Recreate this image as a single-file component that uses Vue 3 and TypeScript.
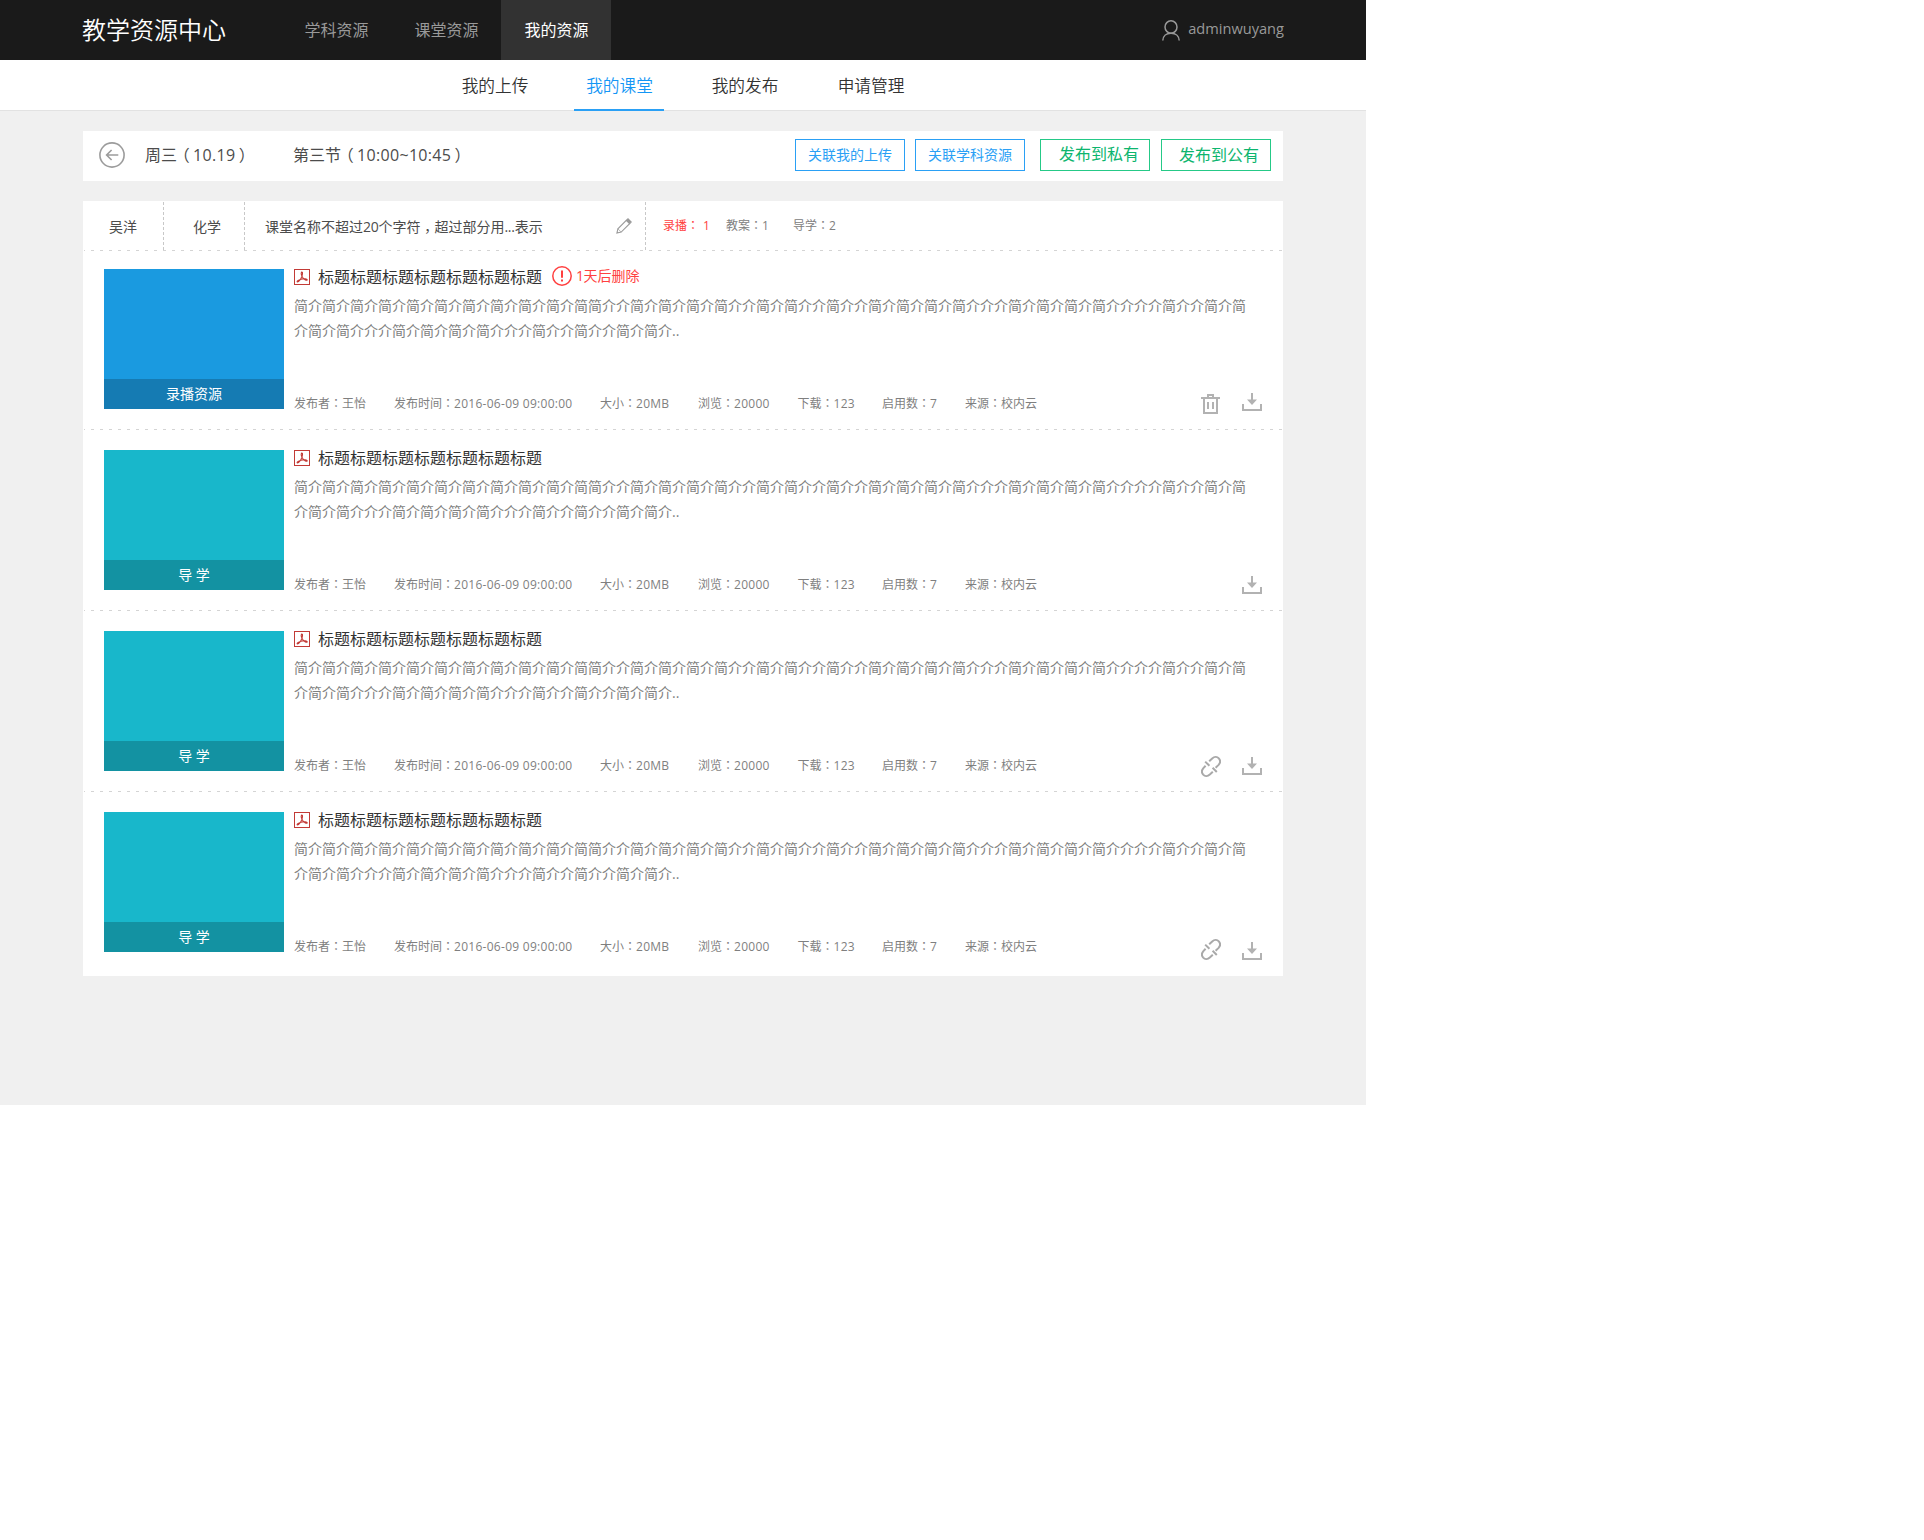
<script setup lang="ts">
import { h, type FunctionalComponent } from 'vue'

// Splits a mixed string so that digits, colons and brackets can be spaced on their own
const Mixed: FunctionalComponent<{ text: string }> = (props) =>
  h(
    'span',
    { class: 'mixed' },
    (props.text.match(/[\x21-\x7e]+(?: [\x21-\x7e]+)*|[：，]|（|）|[^\x21-\x7e：，（）]+/g) ?? []).map((part) => {
      let kind = 'han'
      if (/^[\x21-\x7e]/.test(part)) kind = 'latin'
      else if (part === '：') kind = 'mid'
      else if (part === '，') kind = 'comma'
      else if (part === '（') kind = 'open'
      else if (part === '）') kind = 'close'
      return h('span', { class: 'run-' + kind }, part)
    }),
  )
Mixed.props = ['text']

interface Resource {
  kind: 'record' | 'guide'
  label: string
  warning?: string
  action?: 'trash' | 'link'
}

const mainTabs = ['学科资源', '课堂资源', '我的资源']
const subTabs = ['我的上传', '我的课堂', '我的发布', '申请管理']

const title = '标题标题标题标题标题标题标题'
const intro = [
  '简介简介简介简介简介简介简介简介简介简介简简介介简介简介简介简介介简介简介介简介介简介简介简介简介介介简介简介简介简介介介介简介介简介简',
  '介简介简介介介简介简介简介简介介介简介介简介介简介简介..',
]
const meta = [
  '发布者：王怡',
  '发布时间：2016-06-09 09:00:00',
  '大小：20MB',
  '浏览：20000',
  '下载：123',
  '启用数：7',
  '来源：校内云',
]

const resources: Resource[] = [
  { kind: 'record', label: '录播资源', warning: '1天后删除', action: 'trash' },
  { kind: 'guide', label: '导 学' },
  { kind: 'guide', label: '导 学', action: 'link' },
  { kind: 'guide', label: '导 学', action: 'link' },
]
</script>

<template>
  <div class="page">
    <header class="top">
      <h1 class="brand">教学资源中心</h1>
      <nav class="main-nav">
        <a v-for="(tab, i) in mainTabs" :key="tab" :class="{ active: i === 2 }">{{ tab }}</a>
      </nav>
      <div class="user">
        <svg width="18" height="21" viewBox="0 0 18 21" fill="none" stroke="#999" stroke-width="1.5">
          <ellipse cx="9" cy="7" rx="6" ry="6.2" />
          <path d="M.8 20.5C1 16.5 4 13.3 9 13.3s8 3.2 8.2 7.2" />
        </svg>
        <span>adminwuyang</span>
      </div>
    </header>

    <nav class="sub-nav">
      <a v-for="(tab, i) in subTabs" :key="tab" :class="{ active: i === 1 }">{{ tab }}</a>
    </nav>

    <section class="toolbar">
      <svg class="back" width="26" height="26" viewBox="0 0 26 26" fill="none" stroke="#9c9c9c" stroke-width="1.6">
        <circle cx="13" cy="13" r="12.1" />
        <path d="M19.3 13H8M12.6 8 7.6 13l5 5" />
      </svg>
      <span class="day"><Mixed text="周三（10.19）" /></span>
      <span class="lesson"><Mixed text="第三节（10:00~10:45）" /></span>
      <div class="buttons">
        <button class="blue">关联我的上传</button>
        <button class="blue">关联学科资源</button>
        <button class="green private">发布到私有</button>
        <button class="green public">发布到公有</button>
      </div>
    </section>

    <section class="panel">
      <div class="summary">
        <span class="teacher">吴洋</span>
        <i class="vline"></i>
        <span class="subject">化学</span>
        <i class="vline"></i>
        <span class="course"><Mixed text="课堂名称不超过20个字符，超过部分用...表示" /></span>
        <svg class="pencil" width="16" height="16" viewBox="0 0 16 16" fill="none" stroke="#9a9a9a" stroke-width="1.1">
          <path d="M.9 15.1 1.9 10.8 10.3 2.4 13.6 5.7 5.2 14.1Z" />
          <path d="M10.6 2.2 12 .8 15.2 4 13.8 5.4Z" fill="#9a9a9a" />
          <path d="M1.9 10.8 5.2 14.1" stroke-width=".7" />
        </svg>
        <i class="vline"></i>
        <span class="count red"><Mixed text="录播：" /><b><Mixed text="1" /></b></span>
        <span class="count plan"><Mixed text="教案：1" /></span>
        <span class="count"><Mixed text="导学：2" /></span>
      </div>

      <article v-for="(r, i) in resources" :key="i" :class="['row', 'row-' + (i + 1)]">
        <i class="hline"></i>
        <div class="row-body">
          <div :class="['thumb', r.kind]">
            <span>{{ r.label }}</span>
          </div>
          <div class="info">
            <div class="title-line">
              <svg width="16" height="16" viewBox="0 0 16 16" fill="none" stroke="#c23a36">
                <rect x=".5" y=".5" width="15" height="15" />
                <path d="M7.6 3.1C9 2.8 8.500 5.500 7.800 7.600 6.800 10 4.800 12.700 3.400 13 2.400 12.700 4.300 10.900 7 10.200S13.400 9.800 13.200 10.900C12.600 11.800 9.700 10.300 8.500 8.200 7.600 6.500 6.900 3.800 7.600 3.100Z" stroke-width="1.1" />
              </svg>
              <h2>{{ title }}</h2>
              <span v-if="r.warning" class="warning">
                <svg width="20" height="20" viewBox="0 0 20 20" fill="none" stroke="#ff4040" stroke-width="1.5">
                  <circle cx="10" cy="10" r="9.200" />
                  <path d="M10 4.500V11.800M10 13.600V15.600" stroke-width="2" />
                </svg>
                <Mixed :text="r.warning" />
              </span>
            </div>
            <p class="intro">
              <span v-for="line in intro" :key="line">{{ line }}</span>
            </p>
            <div class="foot">
              <span v-for="m in meta" :key="m"><Mixed :text="m" /></span>
            </div>
          </div>
          <div class="actions">
            <svg v-if="r.action === 'trash'" class="trash" width="19" height="20" viewBox="0 0 19 20" fill="none" stroke="#b2b2b2" stroke-width="2">
              <path d="M0 4H19M3 4V19H16V4M7 3V1H12V3" />
              <path d="M7 8V15M12 8V15" />
            </svg>
            <svg v-if="r.action === 'link'" class="link" width="20" height="21" viewBox="0 0 20 21" fill="none" stroke="#a9a9a9" stroke-width="2">
              <path d="M8.200 5.200 11.200 2.400C13.500.4 16.300.8 17.800 2.400 19.500 4.300 19.300 7 17.600 8.900L14.600 11.700" />
              <path d="M11.800 15.800 8.800 18.600C6.500 20.600 3.700 20.200 2.200 18.600.5 16.700.7 14 2.400 12.100L4.600 9.800" />
              <path d="M4.200 5.600 8.400 9.800M11.600 11.800 15.800 16" />
            </svg>
            <svg class="download" width="20" height="18" viewBox="0 0 20 18">
              <path d="M9 0H11V6.500H15L10 12 5 6.500H9Z" fill="#b2b2b2" />
              <path d="M1 11V17H19V11" fill="none" stroke="#b2b2b2" stroke-width="2" />
            </svg>
          </div>
        </div>
      </article>
    </section>
  </div>
</template>

<style>
body {
  margin: 0;
  background: #fff;
}
.mixed {
  white-space: nowrap;
}
.run-latin {
  letter-spacing: -0.032em;
}
.course .run-latin {
  letter-spacing: -0.02em;
}
.toolbar .run-latin {
  letter-spacing: 0.02em;
}
.foot .run-latin {
  letter-spacing: 0.023em;
}
.run-mid,
.run-comma {
  font-family: 'Noto Sans CJK TC', sans-serif;
}
.run-comma {
  position: relative;
  top: 0.28em;
}
.run-open {
  position: relative;
  left: -0.2em;
}
.run-close {
  position: relative;
  left: 0.2em;
}
</style>

<style scoped>
.page {
  width: 1366px;
  height: 1105px;
  background: #f0f0f0;
  font-family: 'Open Sans', 'Noto Sans CJK SC', sans-serif;
  color: #4c4c4c;
  font-size: 14px;
}
h1,
h2,
p {
  margin: 0;
  font-weight: 400;
}
svg {
  display: block;
  flex: none;
}
.top {
  height: 60px;
  box-sizing: border-box;
  padding: 0 82px 0 82px;
  background: #1a1a1a;
  display: flex;
}
.brand {
  width: 199px;
  font-size: 24px;
  font-weight: 350;
  line-height: 59px;
  color: #fff;
}
.main-nav {
  display: flex;
}
.main-nav a {
  width: 110px;
  box-sizing: border-box;
  padding-left: 1px;
  text-align: center;
  font-size: 16px;
  line-height: 61px;
  color: #999;
}
.main-nav a.active {
  background: #323232;
  color: #fff;
}
.user {
  margin-left: auto;
  display: flex;
  align-items: flex-start;
  gap: 8px;
  color: #999;
  font-size: 14.6px;
  line-height: 57px;
}
.user svg {
  margin-top: 20px;
}
.sub-nav {
  height: 51px;
  box-sizing: border-box;
  border-bottom: 1px solid #e2e2e2;
  background: #fff;
  display: flex;
  padding-left: 448px;
  gap: 36px;
}
.sub-nav a {
  width: 90px;
  height: 51px;
  box-sizing: border-box;
  text-align: center;
  font-size: 16.700px;
  font-weight: 350;
  line-height: 52px;
  color: #333;
}
.sub-nav a:first-child {
  padding-left: 4px;
}
.sub-nav a.active {
  padding-left: 1px;
  color: #1496f5;
  border-bottom: 2px solid #2aa0f5;
}
.toolbar {
  width: 1200px;
  height: 50px;
  margin: 20px 0 0 83px;
  background: #fff;
  display: flex;
  align-items: flex-start;
  font-size: 16px;
}
.back {
  margin: 11px 0 0 16px;
}
.day,
.lesson {
  line-height: 48px;
}
.day {
  width: 148px;
  margin-left: 20px;
}
.buttons {
  display: flex;
  margin: 8px 12px 0 auto;
}
.buttons button {
  width: 110px;
  height: 32px;
  padding: 0;
  background: none;
  font-family: inherit;
  text-align: left;
}
.buttons .blue {
  border: 1px solid #2aa0f5;
  color: #2aa0f5;
  font-size: 14px;
  text-indent: 12px;
  margin-right: 10px;
  padding-bottom: 2px;
}
.green {
  border: 1px solid #25c987;
  color: #0cb56e;
  font-size: 16px;
  text-indent: 18px;
}
.buttons .private {
  margin: 0 11px 0 5px;
  padding-bottom: 4px;
}
.buttons .public {
  text-indent: 17px;
  padding-bottom: 2px;
}
.panel {
  width: 1200px;
  height: 775px;
  margin: 20px 0 0 83px;
  background: #fff;
}
.summary {
  height: 49px;
  display: flex;
  line-height: 51px;
}
.teacher {
  width: 54px;
  padding-left: 26px;
}
.subject {
  width: 51px;
  padding-left: 29px;
}
.course {
  width: 351px;
  padding-left: 20px;
}
.pencil {
  margin: 17px 13px 0 0;
}
.vline {
  width: 1px;
  height: 48px;
  margin-top: 1px;
  background: repeating-linear-gradient(#c8c8c8 0 3px, transparent 3px 5px);
}
.count {
  font-size: 12px;
  line-height: 48px;
  color: #808080;
}
.count b {
  font-weight: 400;
  margin-left: 4px;
}
.red {
  width: 63px;
  margin-left: 17px;
  color: #ff4040;
}
.plan {
  width: 67px;
}
.hline {
  display: block;
  height: 1px;
  margin: 0 1px;
  background: repeating-linear-gradient(90deg, #d4d4d4 0 3px, transparent 3px 9px) -2px 0 / 1300px 1px;
}
.row {
  height: 181px;
}
.row-1 {
  height: 179px;
}
.row-body {
  display: flex;
  padding: 20px 0 0 21px;
}
.row-1 .row-body {
  padding-top: 18px;
}
.thumb {
  width: 180px;
  height: 140px;
  display: flex;
  align-items: flex-end;
}
.thumb span {
  flex: 1;
  line-height: 30px;
  color: #fff;
  text-align: center;
}
.record {
  background: #1a9ae0;
}
.record span {
  background: #157bb3;
}
.guide {
  background: #18b7cb;
}
.guide span {
  background: #1392a2;
}
.info {
  width: 907px;
  margin-left: 10px;
}
.title-line {
  display: flex;
  height: 24px;
}
h2 {
  margin-left: 8px;
  font-size: 16px;
  line-height: 17px;
  color: #333;
}
.warning {
  display: flex;
  margin: -3px 0 0 10px;
  gap: 4px;
  height: 20px;
  line-height: 20px;
  color: #ff4040;
}
.intro {
  height: 97px;
  line-height: 25px;
  color: #7f7f7f;
}
.intro span {
  display: block;
  white-space: nowrap;
}
.foot {
  display: grid;
  grid-template-columns: 100px 206px 98px 99.500px 84.500px 83px 80px;
  font-size: 12px;
  line-height: 25px;
  color: #7f7f7f;
}
.actions {
  flex: 1;
  display: flex;
  align-items: flex-start;
  padding-top: 124px;
}
.download {
  margin: 2px 21px 0 auto;
}
.row-1 .download {
  margin-top: 0;
}
.row-4 .download {
  margin-top: 6px;
}
.trash {
  margin-top: 1px;
}
.link {
  margin-top: 1px;
}
.row-4 .link {
  margin-top: 3px;
}
</style>
